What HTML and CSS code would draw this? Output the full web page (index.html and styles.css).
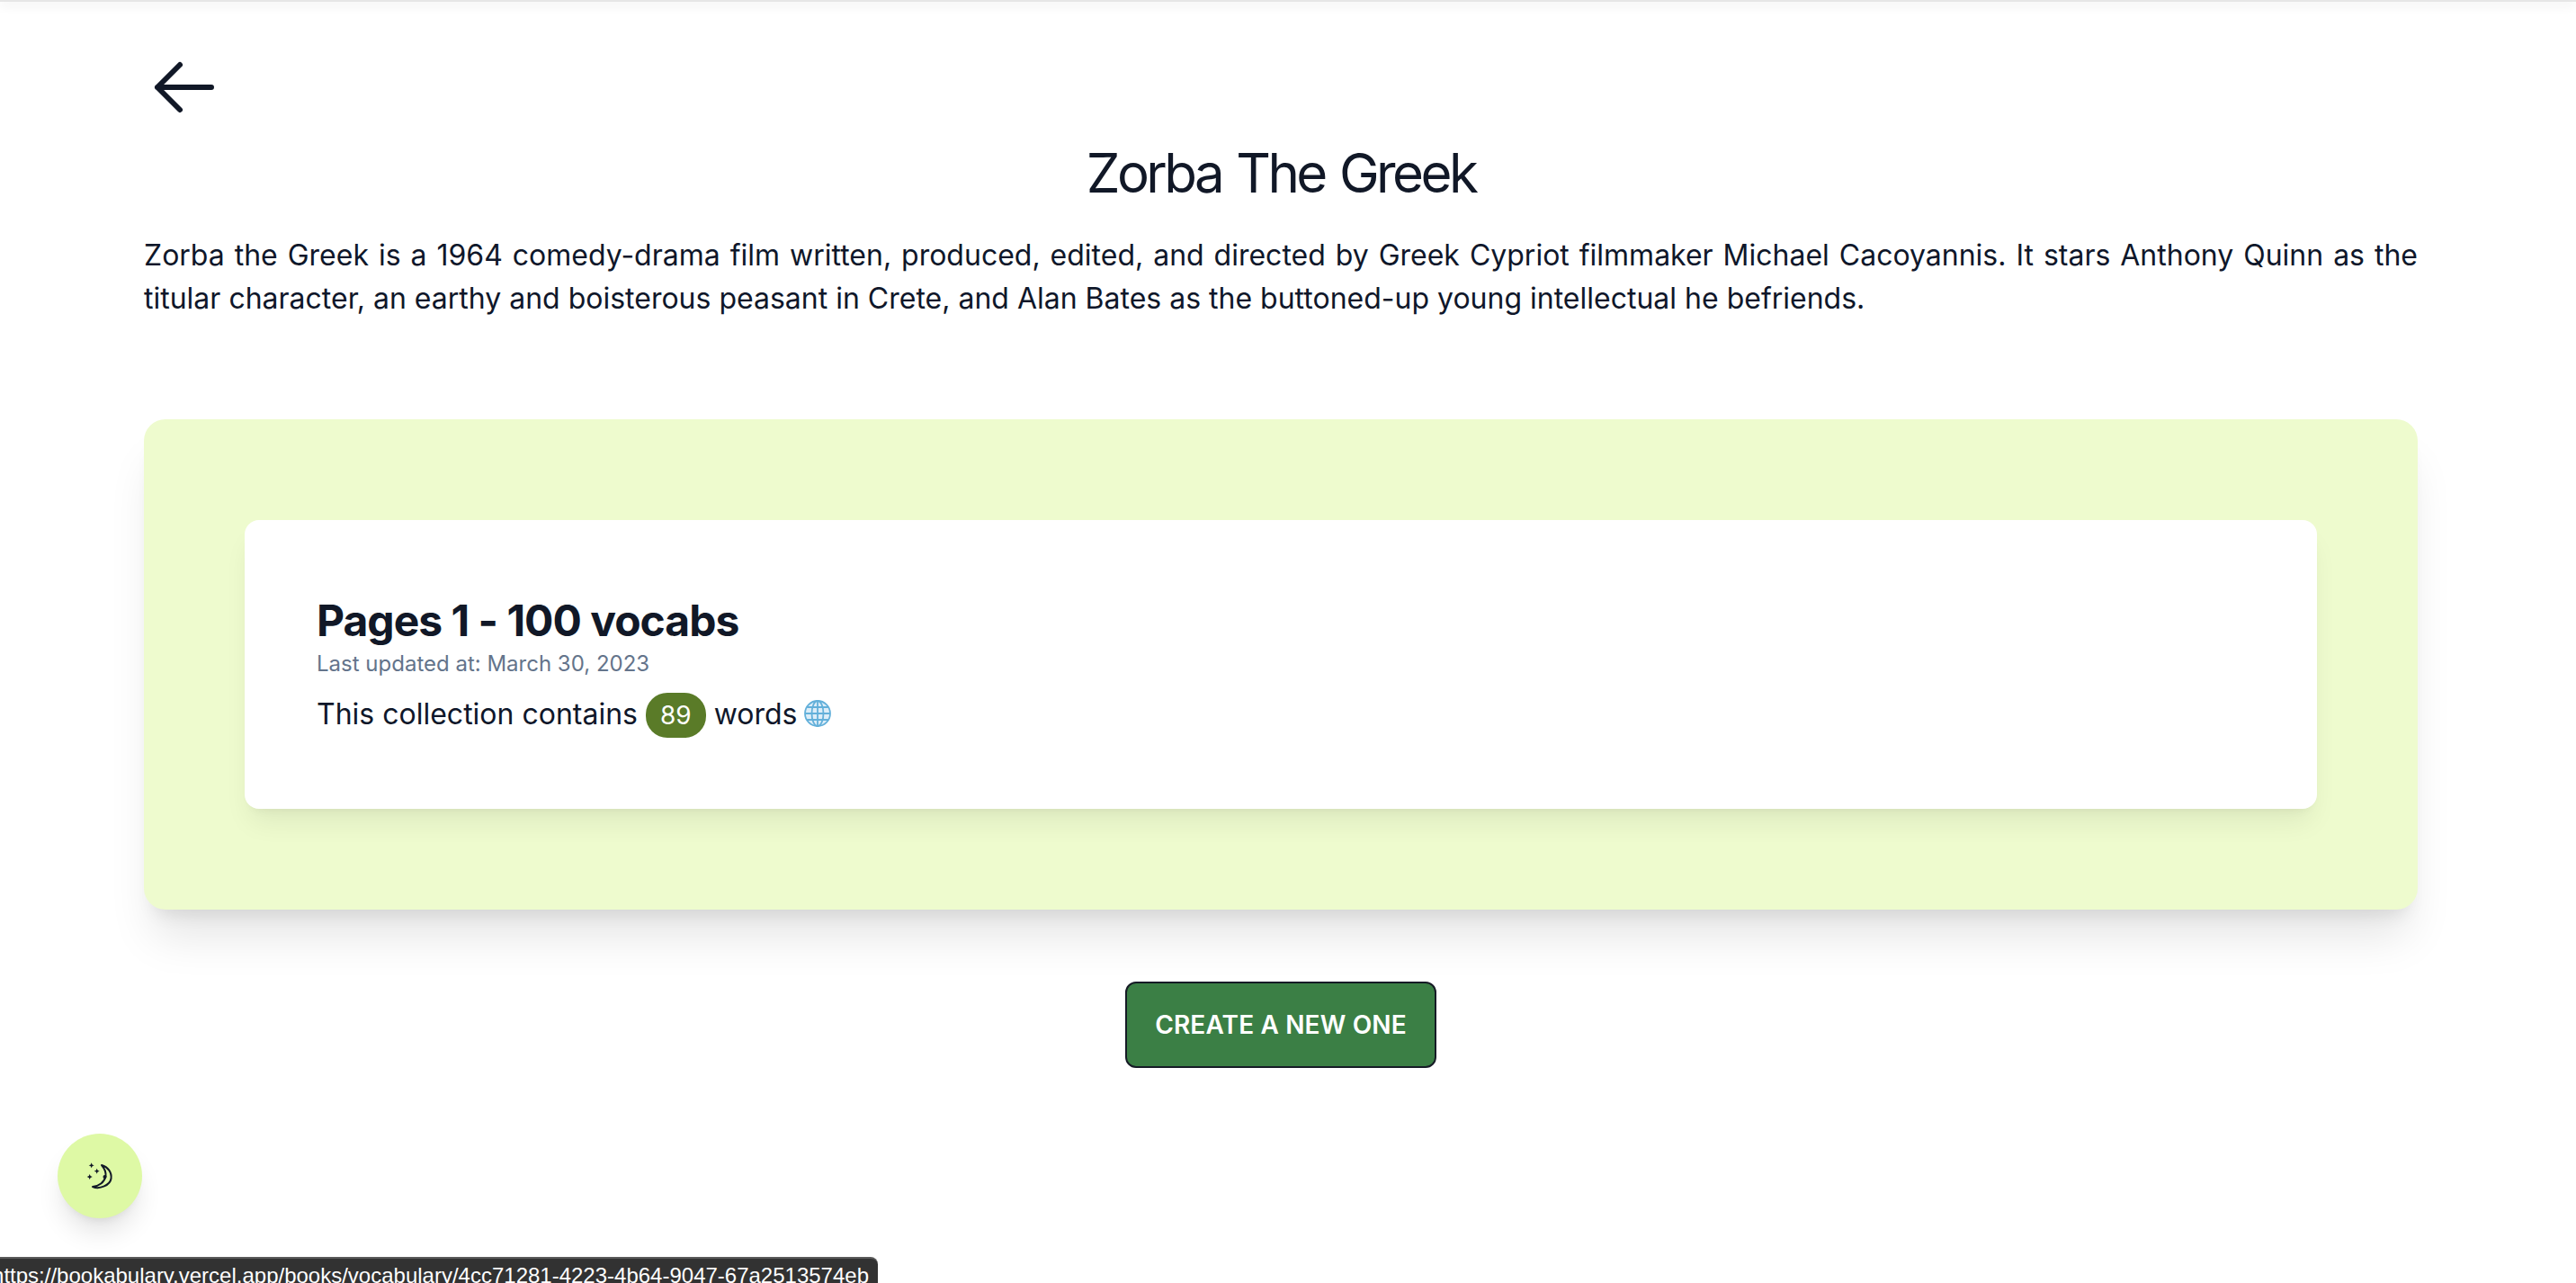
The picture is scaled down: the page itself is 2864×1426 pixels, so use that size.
FILE: index.html
```html
<!DOCTYPE html>
<html lang="en">
<head>
<meta charset="utf-8">
<title>Zorba The Greek</title>
<link rel="stylesheet" href="styles.css">
</head>
<body>
<div class="topbar"></div>
<main class="page">
  <a class="back" href="#" aria-label="Back">
    <svg class="back-icon" viewBox="0 0 24 24" fill="none" stroke="currentColor" stroke-width="1.8" stroke-linecap="round" stroke-linejoin="round"><path d="M10.5 19.5L3 12l7.5-7.5M3 12h18"/></svg>
  </a>
  <h1 class="title">Zorba The Greek</h1>
  <p class="desc">Zorba the Greek is a 1964 comedy-drama film written, produced, edited, and directed by Greek Cypriot filmmaker Michael Cacoyannis. It stars Anthony Quinn as the titular character, an earthy and boisterous peasant in Crete, and Alan Bates as the buttoned-up young intellectual he befriends.</p>
  <section class="panel">
    <article class="card">
      <h2 class="card-title">Pages 1 - 100 vocabs</h2>
      <p class="updated">Last updated at: March 30, 2023</p>
      <p class="count">This collection contains <span class="badge">89</span> words <svg class="globe" viewBox="0 0 30 30" fill="#dcedf8" stroke="#63b0da" stroke-width="1.8"><circle cx="15" cy="15" r="14"/><ellipse cx="15" cy="15" rx="6.5" ry="14"/><path d="M15 1v28M1 15h28M3.2 8h23.6M3.2 22h23.6"/></svg></p>
    </article>
  </section>
  <div class="actions"><button class="create" type="button">CREATE A NEW ONE</button></div>
</main>
<button class="theme" type="button" aria-label="Toggle theme">
  <svg class="theme-icon" viewBox="0 0 36 36" fill="none" stroke="#111827">
    <path stroke-width="2" stroke-linejoin="round" d="M20 6C27 8 31.500 14 30.500 21C29.500 28 18 33.500 10 30C17 29.500 23 25 24.500 18.500C25 14 23 9.500 20 6Z"/>
    <circle cx="23.500" cy="19" r="2" fill="#111827" stroke="none"/>
    <path fill="#111827" stroke="none" d="M8.700 3.300l.9 2.100 2.100.9-2.100.9-.9 2.100-.9-2.100-2.100-.9 2.100-.9zM14.700 9.700l.9 2.100 2.100.9-2.100.9-.9 2.100-.9-2.100-2.100-.9 2.100-.9zM6.700 16l.9 2.100 2.100.9-2.100.9-.9 2.100-.9-2.100-2.100-.9 2.100-.9z"/>
  </svg>
</button>
<div class="status"><span class="status-text">https://bookabulary.vercel.app/books/vocabulary/4cc71281-4223-4b64-9047-67a2513574eb</span></div>
</body>
</html>
```

FILE: styles.css
```css
* { box-sizing: border-box; }
html, body { margin: 0; height: 100%; overflow: hidden; background: #fff; }
body { font-family: Inter, "Liberation Sans", sans-serif; color: #111827; position: relative; }

.topbar { height: 2px; background: #e6e6e6; box-shadow: 0 3px 12px rgba(0, 0, 0, .18); }

.page { padding: 55px 176px 0 160px; }

.back { display: block; width: 80px; height: 80px; margin-left: 5px; color: #111827; }
.back-icon { display: block; width: 80px; height: 80px; }

.title { margin: 19px 0 32px; font-size: 60px; line-height: 72px; font-weight: 400; letter-spacing: -3.6px; word-spacing: 3px; text-align: center; color: #111827; }

.desc { margin: 0 0 110px; font-size: 32px; line-height: 48px; text-align: justify; color: #0f172a; }

.panel { padding: 112px; background: #eefbce; border-radius: 24px; box-shadow: 0 40px 50px -10px rgba(0, 0, 0, .1), 0 16px 20px -12px rgba(0, 0, 0, .1); }

.card { padding: 80px; background: #fff; border-radius: 16px; box-shadow: 0 20px 30px -6px rgba(0, 0, 0, .07), 0 8px 12px -8px rgba(0, 0, 0, .07); }

.card-title { margin: 0; font-size: 48px; line-height: 64px; font-weight: 700; color: #111827; letter-spacing: -1px; }
.updated { margin: 0; font-size: 24px; line-height: 32px; color: #64748b; }
.count { margin: 16px 0 0; font-size: 32px; line-height: 48px; color: #0f172a; }

.badge { padding: 8px 16px; font-size: 28px; color: #fff; background: #5a7b28; border-radius: 24px; }
.globe { display: inline-block; width: 30px; height: 30px; vertical-align: -3px; margin-left: -1px; }

.actions { display: flex; justify-content: center; margin-top: 80px; }
.create { width: 346px; height: 96px; padding: 0; border: 2px solid #161b26; border-radius: 12px; background: #3b7f45; color: #fff; font-family: inherit; font-size: 28px; font-weight: 600; letter-spacing: .15px; }

.theme { position: absolute; left: 64px; top: 1260px; display: flex; align-items: center; justify-content: center; width: 94px; height: 94px; padding: 0; border: 0; border-radius: 50%; background: #def9a5; box-shadow: 0 20px 30px -6px rgba(0, 0, 0, .12), 0 8px 12px -8px rgba(0, 0, 0, .1); }
.theme-icon { display: block; width: 36px; height: 36px; }

.status { position: absolute; left: 0; top: 1397px; display: flex; justify-content: flex-end; width: 976px; height: 44px; padding: 5px 10px 0 0; overflow: hidden; background: #323232; border-top: 2px solid #5a5a5a; border-radius: 0 8px 0 0; color: #fff; font-family: "Liberation Sans", sans-serif; font-size: 24px; line-height: 28px; white-space: nowrap; }
.status-text { flex: none; }
```
